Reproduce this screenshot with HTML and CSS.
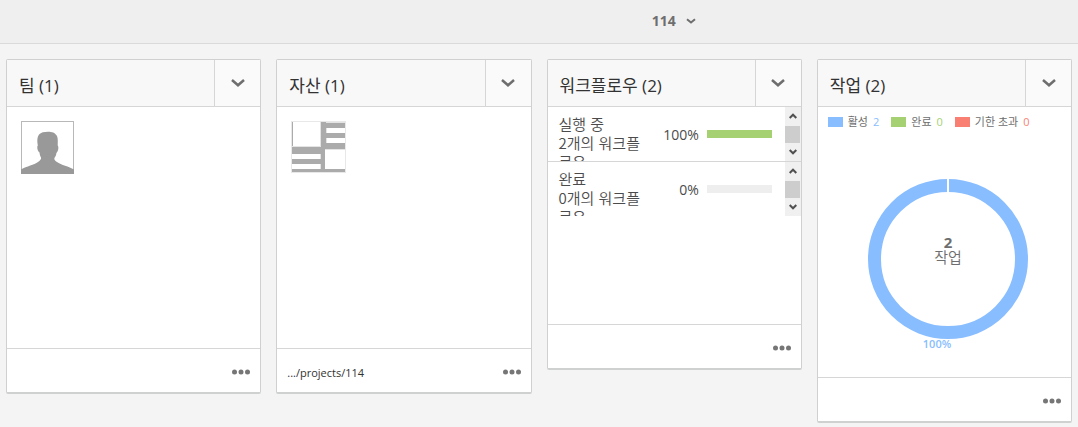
FILE: index.html
```html
<!DOCTYPE html>
<html lang="ko">
<head>
<meta charset="utf-8">
<title>114</title>
<link rel="stylesheet" href="styles.css">
</head>
<body>
<header class="topbar">
  <button class="project-menu" type="button">114
    <svg class="caret" viewBox="0 0 10 6" aria-hidden="true"><path d="M1 1.200 5 4.500 9 1.200"/></svg>
  </button>
</header>
<main class="board">
  <section class="card">
    <div class="card-head">
      <h2 class="card-title">팀 (1)</h2>
      <button class="card-toggle" type="button" aria-label="팀"><svg class="chevron" viewBox="0 0 14 8" aria-hidden="true"><path d="M1 1 7 6.300 13 1"/></svg></button>
    </div>
    <div class="card-body media">
      <svg class="avatar" viewBox="0 0 53 53" aria-hidden="true">
        <rect x=".5" y=".5" width="52" height="52" fill="#fff" stroke="#b8b8b8"/>
        <path fill="#999" d="M0 53v-4.500C6 45 13 44 17 41c2-1.500 3.500-3 3-4.500-1-1.500-1.200-3-1.500-5-1.500-1-2.500-3.500-2.200-6l.5-1C16 20 16 16.500 18 13.500c2-2 5-2.700 9-2.700 4.500 0 6.500 1 7.500 2.500 2.500 1.500 2.500 6 2.200 11.200 1.200 1 .8 6-1.300 7.500-.2 2-.8 3.500-2 5-.5 1.700 1 3 2.600 4 4 3 12 4.500 17 7.500V53z"/>
      </svg>
    </div>
    <footer class="card-foot">
      <button class="more" type="button" aria-label="팀 (1)"><svg class="dots" viewBox="0 0 18 6" aria-hidden="true"><circle cx="2.500" cy="3" r="2.500"/><circle cx="9" cy="3" r="2.500"/><circle cx="15.500" cy="3" r="2.500"/></svg></button>
    </footer>
  </section>

  <section class="card">
    <div class="card-head">
      <h2 class="card-title">자산 (1)</h2>
      <button class="card-toggle" type="button" aria-label="자산"><svg class="chevron" viewBox="0 0 14 8" aria-hidden="true"><path d="M1 1 7 6.300 13 1"/></svg></button>
    </div>
    <div class="card-body media">
      <svg class="asset" viewBox="0 0 55 52" shape-rendering="crispEdges" aria-hidden="true">
        <rect width="55" height="52" fill="#e8e8e8"/>
        <rect x="1" y="1" width="53" height="50" fill="#ababab"/>
        <path fill="#fff" d="M2 1h27v24H2zM36 7h18v5H36zM36 17h18v5H36zM34 28h20v20H34zM1 33h28v5H1zM1 43h28v5H1z"/>
        <path fill="#e4e4e4" d="M35 1h19v1H35zM29 1h1v24h-1zM29 33h1v5h-1zM29 43h1v5h-1zM1 25h29v1H1zM35 7h1v5h-1zM35 17h1v5h-1zM34 28h20v1H34z"/>
      </svg>
    </div>
    <footer class="card-foot">
      <a class="path" href="#projects">.../projects/114</a>
      <button class="more" type="button" aria-label="자산 (1)"><svg class="dots" viewBox="0 0 18 6" aria-hidden="true"><circle cx="2.500" cy="3" r="2.500"/><circle cx="9" cy="3" r="2.500"/><circle cx="15.500" cy="3" r="2.500"/></svg></button>
    </footer>
  </section>

  <section class="card">
    <div class="card-head">
      <h2 class="card-title">워크플로우 (2)</h2>
      <button class="card-toggle" type="button" aria-label="워크플로우"><svg class="chevron" viewBox="0 0 14 8" aria-hidden="true"><path d="M1 1 7 6.300 13 1"/></svg></button>
    </div>
    <div class="card-body flows">
      <div class="flow">
        <div class="flow-text"><div>실행 중</div><div>2개의 워크플로우</div></div>
        <div class="flow-rate">100%</div>
        <div class="bar"><div class="bar-fill" style="width:100%"></div></div>
        <div class="scroller">
          <button class="scroll-step" type="button" aria-label="위로"><svg class="step" viewBox="0 0 8 6" aria-hidden="true"><path d="M.7 5 4 1.700 7.300 5"/></svg></button>
          <div class="thumb"></div>
          <button class="scroll-step" type="button" aria-label="아래로"><svg class="step" viewBox="0 0 8 6" aria-hidden="true"><path d="M.7 1 4 4.300 7.300 1"/></svg></button>
        </div>
      </div>
      <div class="flow">
        <div class="flow-text"><div>완료</div><div>0개의 워크플로우</div></div>
        <div class="flow-rate">0%</div>
        <div class="bar"><div class="bar-fill" style="width:0%"></div></div>
        <div class="scroller">
          <button class="scroll-step" type="button" aria-label="위로"><svg class="step" viewBox="0 0 8 6" aria-hidden="true"><path d="M.7 5 4 1.700 7.300 5"/></svg></button>
          <div class="thumb"></div>
          <button class="scroll-step" type="button" aria-label="아래로"><svg class="step" viewBox="0 0 8 6" aria-hidden="true"><path d="M.7 1 4 4.300 7.300 1"/></svg></button>
        </div>
      </div>
    </div>
    <footer class="card-foot">
      <button class="more" type="button" aria-label="워크플로우 (2)"><svg class="dots" viewBox="0 0 18 6" aria-hidden="true"><circle cx="2.500" cy="3" r="2.500"/><circle cx="9" cy="3" r="2.500"/><circle cx="15.500" cy="3" r="2.500"/></svg></button>
    </footer>
  </section>

  <section class="card">
    <div class="card-head">
      <h2 class="card-title">작업 (2)</h2>
      <button class="card-toggle" type="button" aria-label="작업"><svg class="chevron" viewBox="0 0 14 8" aria-hidden="true"><path d="M1 1 7 6.300 13 1"/></svg></button>
    </div>
    <div class="card-body tasks">
      <ul class="legend">
        <li class="key active"><span class="swatch"></span>활성<span class="count">2</span></li>
        <li class="key done"><span class="swatch"></span>완료<span class="count">0</span></li>
        <li class="key late"><span class="swatch"></span>기한 초과<span class="count">0</span></li>
      </ul>
      <svg class="donut" viewBox="0 0 160 178" role="img">
        <circle class="ring" cx="80" cy="80" r="73.500"/>
        <path class="split" d="M80 0v14"/>
        <text class="total" x="80" y="69">2</text>
        <text class="unit" x="80" y="84">작업</text>
        <text class="share" x="69" y="169">100%</text>
      </svg>
    </div>
    <footer class="card-foot">
      <button class="more" type="button" aria-label="작업 (2)"><svg class="dots" viewBox="0 0 18 6" aria-hidden="true"><circle cx="2.500" cy="3" r="2.500"/><circle cx="9" cy="3" r="2.500"/><circle cx="15.500" cy="3" r="2.500"/></svg></button>
    </footer>
  </section>
</main>
</body>
</html>
```
FILE: styles.css
```css
* { box-sizing: border-box; }
body {
  margin: 0;
  background: #f4f4f4;
  color: #323232;
  font-family: "Open Sans", "Noto Sans CJK KR", sans-serif;
}
button {
  margin: 0;
  padding: 0;
  border: 0;
  background: none;
  font-family: inherit;
}
svg { display: block; flex: none; }

.topbar {
  display: flex;
  justify-content: center;
  height: 44px;
  padding-left: 25%;
  border-bottom: 1px solid #dadada;
  background: #efefef;
}
.project-menu {
  display: flex;
  align-items: center;
  gap: 10px;
  padding-bottom: 2px;
  color: #6e6e6e;
  font-size: 14px;
  font-weight: 700;
}
.caret { width: 10px; height: 6px; fill: none; stroke: #6e6e6e; stroke-width: 2; }

.board {
  display: grid;
  grid-template-columns: repeat(4, minmax(0, 1fr));
  align-items: start;
  gap: 15px;
  padding: 15px 6px 0;
}
.card {
  border: 1px solid #d0d0d0;
  border-bottom: 2px solid #cfd1d0;
  border-radius: 2px;
  background: #fff;
}
.card-head {
  display: flex;
  height: 47px;
  border-bottom: 1px solid #d6d6d6;
  background: #f8f8f8;
}
.card-title {
  flex: 1;
  margin: 0;
  padding: 4px 0 0 12px;
  font-size: 17px;
  font-weight: 400;
  line-height: 43px;
}
.card-toggle {
  display: grid;
  place-items: center;
  width: 46px;
  border-left: 1px solid #d6d6d6;
  background: #fafafa;
}
.chevron { width: 14px; height: 8px; fill: none; stroke: #6e6e6e; stroke-width: 2.500; }

.media { min-height: 241px; padding: 14px; }
.avatar { width: 53px; height: 53px; }
.asset { width: 55px; height: 52px; }

.card-foot {
  display: flex;
  align-items: center;
  height: 44px;
  padding: 3px 10px 0;
  border-top: 1px solid #d6d6d6;
}
.path { color: #323232; font-size: 11px; text-decoration: none; }
.more { margin-left: auto; }
.dots { width: 18px; height: 6px; fill: #767676; }

.flows { min-height: 217px; }
.flow {
  display: flex;
  align-items: center;
  height: 54px;
  overflow: hidden;
  color: #4b4b4b;
  font-size: 14px;
}
.flow + .flow { height: 55px; border-top: 1px solid #d6d6d6; }
.flow-text {
  align-self: flex-start;
  width: 98px;
  padding: 7px 0 0 11px;
  font-family: "Noto Sans CJK KR", sans-serif;
  font-size: 15px;
  font-weight: 350;
  line-height: 19px;
  word-break: break-all;
}
.flow-rate { flex: 1; text-align: right; }
.bar { width: 65px; height: 8px; margin: 0 13px 0 8px; background: #eee; }
.bar-fill { height: 100%; background: #a5d173; }
.scroller {
  display: flex;
  flex-direction: column;
  align-self: stretch;
  width: 16px;
  background: #f0f0f0;
}
.scroll-step { display: grid; flex: 1; place-items: center; }
.step { width: 8px; height: 6px; fill: none; stroke: #505050; stroke-width: 2; }
.thumb { width: 15px; height: 17px; background: #cdcdcd; }

.tasks { min-height: 270px; }
.legend {
  display: flex;
  gap: 12px;
  margin: 0;
  padding: 7px 0 0 10px;
  color: #6e6e6e;
  font-size: 11px;
  line-height: 16px;
  list-style: none;
}
.key { display: flex; align-items: center; gap: 5px; }
.swatch { width: 15px; height: 10px; background: currentColor; }
.active .count, .active .swatch { color: #88bdff; }
.done .count, .done .swatch { color: #a5d173; }
.late .count, .late .swatch { color: #f97f73; }
.donut { width: 160px; margin: 49px 0 0 50px; }
.ring { fill: none; stroke: #88bdff; stroke-width: 13; }
.split { stroke: #fff; stroke-width: 2; }
.total, .unit, .share { fill: #6e6e6e; text-anchor: middle; }
.total { font-size: 15px; font-weight: 700; }
.unit { font-size: 15px; font-weight: 350; }
.share { fill: #88bdff; font-size: 11px; font-weight: 600; }
```
